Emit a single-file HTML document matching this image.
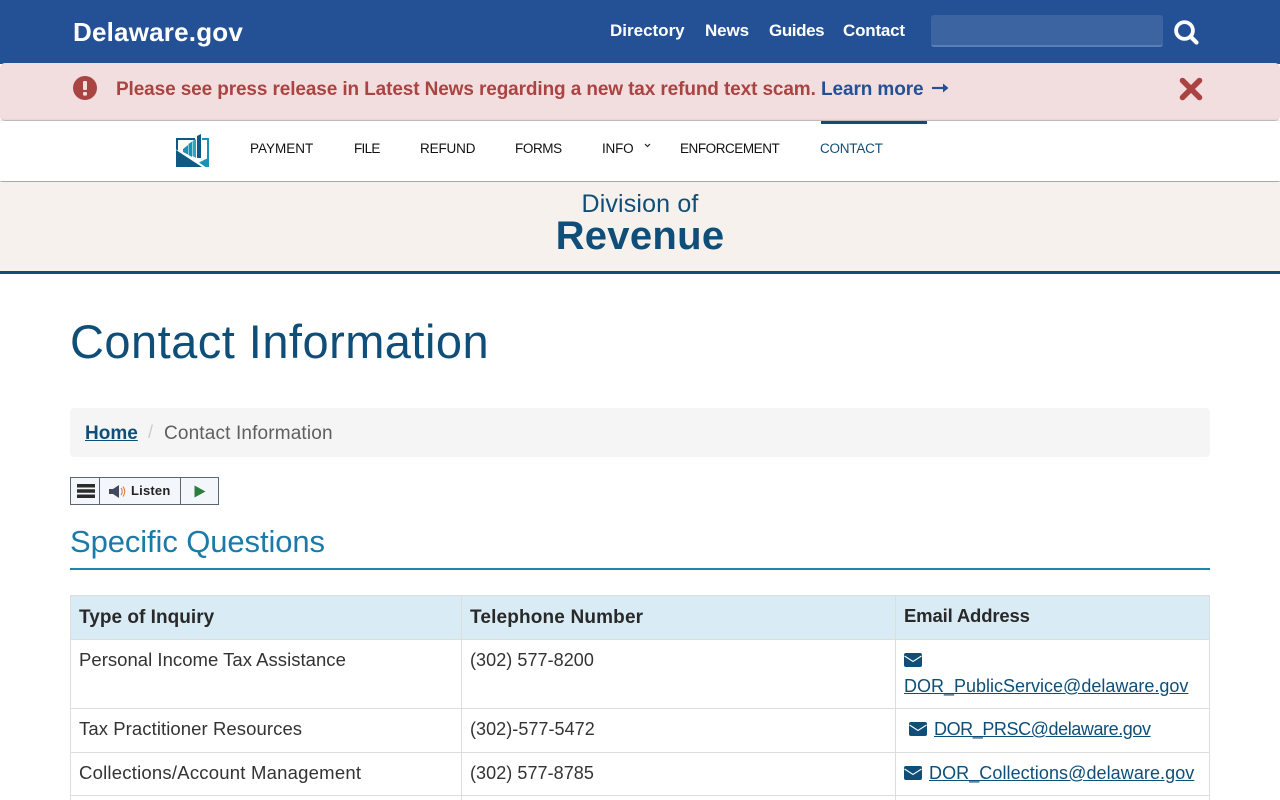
<!DOCTYPE html>
<html lang="en"><head><meta charset="utf-8"><title>Contact Information</title>
<style>
html,body{margin:0;padding:0;width:1280px;height:800px;overflow:hidden;background:#fff}
body{position:relative;font-family:"Liberation Sans",sans-serif;color:#333}
.a{position:absolute;white-space:nowrap}
.b{font-weight:700}
.nav{font-size:13.5px;color:#111;top:140px;line-height:18px}
.top{font-size:17px;font-weight:700;color:#fff;top:21px;line-height:20px}
.h{position:absolute;background:#d9ecf5}
.l{position:absolute;background:#ddd}
.t{font-size:18px;line-height:24px;color:#333}
.th{font-size:19px;line-height:24px;color:#292929;font-weight:700}
a{color:#0f4e78;text-decoration:underline}
</style></head><body>
<div class="a" style="left:0;top:0;width:1280px;height:64px;background:#245195"></div>
<div class="a b" style="left:73px;top:15px;font-size:26px;line-height:34px;color:#fff;letter-spacing:.2px">Delaware.gov</div>
<div class="a top" style="left:610px;letter-spacing:0">Directory</div>
<div class="a top" style="left:705px;letter-spacing:-.1px">News</div>
<div class="a top" style="left:769px;letter-spacing:-.4px">Guides</div>
<div class="a top" style="left:843px;letter-spacing:-.2px">Contact</div>
<div class="a" style="left:931px;top:15px;width:232px;height:32px;background:#3b64a0;border-bottom:2px solid #5a7fb5;box-sizing:border-box;border-radius:3px"></div>
<svg class="a" style="left:1174px;top:20px" width="25" height="25" viewBox="0 0 25 25"><circle cx="10.500" cy="10.500" r="8.400" fill="none" stroke="#fff" stroke-width="3.800"/><path d="M16.500 16.500L22.500 22.500" stroke="#fff" stroke-width="4.200" stroke-linecap="round"/></svg>

<div class="a" style="left:0;top:63px;width:1280px;height:58px;background:#f2dede;border-bottom:1px solid #d8cccc;box-sizing:border-box;border-radius:5px"></div>
<svg class="a" style="left:73px;top:76px" width="24" height="24" viewBox="0 0 24 24"><circle cx="12" cy="12" r="12" fill="#a94442"/><rect x="10" y="5" width="4" height="9" rx="1" fill="#f2dede"/><rect x="10" y="16" width="4" height="3.600" rx="1" fill="#f2dede"/></svg>
<div class="a b" style="left:116px;top:77px;font-size:19px;line-height:26px;color:#a94442;letter-spacing:-.115px">Please see press release in Latest News regarding a new tax refund text scam.</div>
<div class="a b" style="left:821px;top:77px;font-size:19px;line-height:26px;color:#245195;letter-spacing:-.1px">Learn more</div>
<svg class="a" style="left:932px;top:82px" width="17" height="12" viewBox="0 0 17 12"><path d="M0 6H14" stroke="#245195" stroke-width="2.200"/><path d="M11 1.500L16.500 6L11 10.500Z" fill="#245195"/></svg>
<svg class="a" style="left:1179px;top:77px" width="24" height="24" viewBox="0 0 24 24"><path d="M3.500 3.500L20.500 20.500M20.500 3.500L3.500 20.500" stroke="#a94442" stroke-width="5.600" stroke-linecap="round"/></svg>

<div class="a" style="left:0;top:121px;width:1280px;height:60px;background:#fff;box-shadow:0 1px 3px rgba(0,0,0,.55)"></div>
<div class="a" style="left:821px;top:121px;width:106px;height:3px;background:#0f4e78"></div>
<svg class="a" style="left:176px;top:134px" width="33" height="33" viewBox="0 0 33 33">
<path d="M0 4H19V6H2V16.500L0 15.500Z" fill="#0f5a85"/>
<path d="M0 16L26 33H0Z" fill="#0f5a85"/>
<path d="M7 15L12 11V20.500L7 18Z" fill="#1b91b5"/>
<path d="M12.500 10L16 7.500V23L12.500 21Z" fill="#1b91b5"/>
<path d="M16.500 7L20 5V24L16.500 22Z" fill="#2aa5c2"/>
<path d="M21 2L25 0V24H21Z" fill="#0f5a85"/>
<path d="M26 4H33V33H29.500L23 28.500L31 24.500V6H26Z" fill="#1b91b5"/>
</svg>
<div class="a nav" style="left:250px;letter-spacing:0">PAYMENT</div>
<div class="a nav" style="left:354px;letter-spacing:-.7px">FILE</div>
<div class="a nav" style="left:420px;letter-spacing:-.15px">REFUND</div>
<div class="a nav" style="left:515px;letter-spacing:-.4px">FORMS</div>
<div class="a nav" style="left:602px;letter-spacing:-.2px">INFO</div>
<svg class="a" style="left:644px;top:143px" width="7" height="5" viewBox="0 0 7 5"><path d="M1 1L3.500 3.500L6 1" fill="none" stroke="#222" stroke-width="1.200"/></svg>
<div class="a nav" style="left:680px;letter-spacing:-.45px">ENFORCEMENT</div>
<div class="a nav" style="left:820px;color:#0f4e78;letter-spacing:-.23px">CONTACT</div>

<div class="a" style="left:0;top:182px;width:1280px;height:89px;background:#f6f1ec"></div>
<div class="a" style="left:0;top:271px;width:1280px;height:3px;background:#0f4e78"></div>
<div class="a" style="left:0;width:1280px;top:189px;text-align:center;font-size:25px;line-height:30px;color:#0f4e78;letter-spacing:.15px">Division of</div>
<div class="a b" style="left:0;width:1280px;top:213px;text-align:center;font-size:40px;line-height:46px;color:#0f4e78;letter-spacing:.3px">Revenue</div>

<div class="a" style="left:70px;top:316px;font-size:47px;line-height:52px;color:#0f4e78;letter-spacing:.47px">Contact Information</div>

<div class="a" style="left:70px;top:408px;width:1140px;height:49px;background:#f5f5f5;border-radius:4px"></div>
<div class="a b" style="left:85px;top:422px;font-size:19px;line-height:24px"><a href="#">Home</a></div>
<div class="a" style="left:148px;top:420px;font-size:18px;line-height:24px;color:#ccc">/</div>
<div class="a" style="left:164px;top:422px;font-size:19px;line-height:24px;color:#5f5f5f;letter-spacing:.15px">Contact Information</div>

<div class="a" style="left:70px;top:477px;width:149px;height:28px;box-sizing:border-box;border:1px solid #5b6670;background:#f3f7fb"></div>
<div class="a" style="left:99px;top:477px;width:1px;height:28px;background:#5b6670"></div>
<div class="a" style="left:180px;top:477px;width:1px;height:28px;background:#5b6670"></div>
<svg class="a" style="left:77px;top:484px" width="18" height="14" viewBox="0 0 18 14"><path d="M0 0H18V3.500H0ZM0 5.200H18V8.700H0ZM0 10.500H18V14H0Z" fill="#2b2b2b"/></svg>
<svg class="a" style="left:109px;top:484px" width="18" height="15" viewBox="0 0 18 15"><path d="M0 5H4L10 1V14L4 10H0Z" fill="#3f4a60"/><path d="M12 4Q14.500 7.500 12 11M14 2.500Q17.500 7.500 14 12.500" fill="none" stroke="#e07a4a" stroke-width="1.100"/></svg>
<div class="a b" style="left:131px;top:483px;font-size:13px;line-height:16px;color:#222;letter-spacing:.2px">Listen</div>
<svg class="a" style="left:194px;top:485px" width="12" height="13" viewBox="0 0 12 13"><path d="M0.500 0.500L11.500 6.500L0.500 12.500Z" fill="#2d7d3c"/></svg>

<div class="a" style="left:70px;top:523px;font-size:31px;line-height:38px;color:#1b7aa8;letter-spacing:-.1px">Specific Questions</div>
<div class="a" style="left:70px;top:568px;width:1140px;height:2px;background:#1b86ad"></div>

<div class="h" style="left:70px;top:595px;width:1140px;height:45px"></div>
<div class="l" style="left:70px;top:595px;width:1140px;height:1px"></div>
<div class="l" style="left:70px;top:639px;width:1140px;height:1px"></div>
<div class="l" style="left:70px;top:708px;width:1140px;height:1px"></div>
<div class="l" style="left:70px;top:752px;width:1140px;height:1px"></div>
<div class="l" style="left:70px;top:795px;width:1140px;height:1px"></div>
<div class="l" style="left:70px;top:595px;width:1px;height:205px"></div>
<div class="l" style="left:461px;top:595px;width:1px;height:205px"></div>
<div class="l" style="left:895px;top:595px;width:1px;height:205px"></div>
<div class="l" style="left:1209px;top:595px;width:1px;height:205px"></div>

<div class="a th" style="left:79px;top:606px;letter-spacing:.03px">Type of Inquiry</div>
<div class="a th" style="left:470px;top:606px;letter-spacing:.16px">Telephone Number</div>
<div class="a th" style="left:904px;top:604px;font-size:18.5px;letter-spacing:-.16px">Email Address</div>

<div class="a t" style="left:79px;top:648px;font-size:18.5px;letter-spacing:.03px">Personal Income Tax Assistance</div>
<div class="a t" style="left:470px;top:648px;letter-spacing:.06px">(302) 577-8200</div>
<svg class="a" style="left:904px;top:653px" width="18" height="14" viewBox="0 0 18 14"><rect width="18" height="14" rx="2" fill="#0f4e78"/><path d="M0.500 3L9 8.500L17.500 3" fill="none" stroke="#fff" stroke-width="1.100"/></svg>
<div class="a t" style="left:904px;top:674px;letter-spacing:0"><a href="#">DOR_PublicService@delaware.gov</a></div>

<div class="a t" style="left:79px;top:717px;font-size:18.5px;letter-spacing:.08px">Tax Practitioner Resources</div>
<div class="a t" style="left:470px;top:717px;letter-spacing:.05px">(302)-577-5472</div>
<svg class="a" style="left:909px;top:722px" width="18" height="14" viewBox="0 0 18 14"><rect width="18" height="14" rx="2" fill="#0f4e78"/><path d="M0.500 3L9 8.500L17.500 3" fill="none" stroke="#fff" stroke-width="1.100"/></svg>
<div class="a t" style="left:934px;top:717px;letter-spacing:-.42px"><a href="#">DOR_PRSC@delaware.gov</a></div>

<div class="a t" style="left:79px;top:761px;font-size:18.5px;letter-spacing:.22px">Collections/Account Management</div>
<div class="a t" style="left:470px;top:761px;letter-spacing:.06px">(302) 577-8785</div>
<svg class="a" style="left:904px;top:766px" width="18" height="14" viewBox="0 0 18 14"><rect width="18" height="14" rx="2" fill="#0f4e78"/><path d="M0.500 3L9 8.500L17.500 3" fill="none" stroke="#fff" stroke-width="1.100"/></svg>
<div class="a t" style="left:929px;top:761px;letter-spacing:.07px"><a href="#">DOR_Collections@delaware.gov</a></div>
</body></html>
